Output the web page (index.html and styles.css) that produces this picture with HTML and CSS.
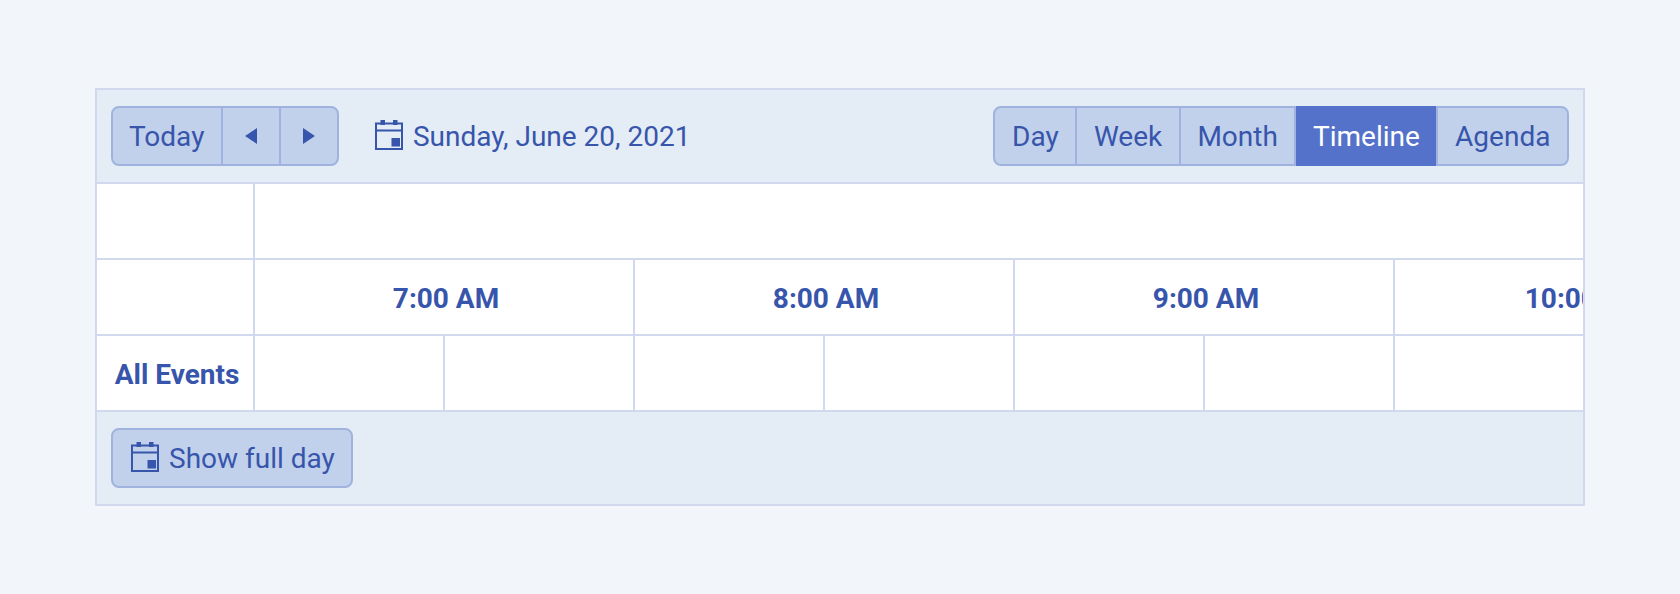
FILE: index.html
```html
<!DOCTYPE html>
<html lang="en">
<head>
<meta charset="utf-8">
<title>Scheduler</title>
<link rel="stylesheet" href="styles.css">
</head>
<body>
<div class="scheduler">
  <div class="toolbar">
    <div class="group">
      <button class="btn btn-today">Today</button>
      <button class="btn btn-icon"><svg class="arrow" viewBox="0 0 12 16"><path d="M12 0V16L0 8Z"/></svg></button>
      <button class="btn btn-icon btn-next"><svg class="arrow" viewBox="0 0 12 16"><path d="M0 0V16L12 8Z"/></svg></button>
    </div>
    <div class="date">
      <svg class="cal" viewBox="0 0 28 30"><path class="cal-line" d="M1 3.5H27V29H1ZM1 10.5H27"/><path class="cal-fill" d="M5.5 0H10V5H5.5ZM18 0H22.5V5H18ZM16.5 18H25V26.5H16.5Z"/></svg>
      <span>Sunday, June 20, 2021</span>
    </div>
    <div class="group views">
      <button class="btn">Day</button>
      <button class="btn">Week</button>
      <button class="btn">Month</button>
      <button class="btn active">Timeline</button>
      <button class="btn">Agenda</button>
    </div>
  </div>
  <div class="grid">
    <div class="row">
      <div class="cell lead"></div>
      <div class="cell wide"></div>
    </div>
    <div class="row">
      <div class="cell lead"></div>
      <div class="cell hour">7:00 AM</div>
      <div class="cell hour">8:00 AM</div>
      <div class="cell hour">9:00 AM</div>
      <div class="cell hour">10:00 AM</div>
    </div>
    <div class="row">
      <div class="cell lead resource">All Events</div>
      <div class="cell half"></div>
      <div class="cell half"></div>
      <div class="cell half"></div>
      <div class="cell half"></div>
      <div class="cell half"></div>
      <div class="cell half"></div>
      <div class="cell half"></div>
      <div class="cell half"></div>
    </div>
  </div>
  <div class="toolbar footer">
    <div class="group">
      <button class="btn btn-full">
        <svg class="cal" viewBox="0 0 28 30"><path class="cal-line" d="M1 3.5H27V29H1ZM1 10.5H27"/><path class="cal-fill" d="M5.5 0H10V5H5.5ZM18 0H22.5V5H18ZM16.5 18H25V26.5H16.5Z"/></svg>
        <span>Show full day</span>
      </button>
    </div>
  </div>
</div>
</body>
</html>
```
FILE: styles.css
```css
* { box-sizing: border-box; }
html, body { margin: 0; height: 100%; }
body {
  background: #f2f5fa;
  padding: 88px 95px;
  font-family: Roboto, "Liberation Sans", sans-serif;
  color: #3755ab;
  overflow: hidden;
}
.scheduler {
  width: 1490px;
  border: 2px solid #d1d9ee;
  background: #fff;
}
.toolbar {
  height: 94px;
  padding: 16px 14px;
  background: #e4ecf6;
  border-bottom: 2px solid #d1d9ee;
  display: flex;
  align-items: center;
}
.footer {
  height: 92px;
  border-bottom: 0;
}
.group {
  display: flex;
  height: 60px;
  border: 2px solid #a0b3de;
  border-radius: 8px;
  background: #c1d1eb;
}
.btn {
  display: flex;
  align-items: center;
  height: 100%;
  margin: 0;
  padding: 0 16.6px;
  border: 0;
  border-right: 2px solid #a0b3de;
  background: transparent;
  font: 400 28px Roboto, "Liberation Sans", sans-serif;
  color: #3755ab;
}
.btn:last-child { border-right: 0; }
.btn-today { padding: 0 16.5px 0 16px; }
.btn-icon {
  width: 58px;
  padding: 0;
  justify-content: center;
}
.btn-next { width: 56px; }
.arrow {
  width: 12px;
  height: 16px;
  fill: #3755ab;
}
.date {
  display: flex;
  align-items: center;
  gap: 10px;
  margin-left: 36px;
  font-size: 28px;
}
.cal {
  width: 28px;
  height: 30px;
  flex: none;
  margin-bottom: 2px;
}
.cal-line {
  fill: none;
  stroke: #3755ab;
  stroke-width: 2;
}
.cal-fill { fill: #3755ab; }
.views {
  margin-left: auto;
}
.active {
  background: #5472c9;
  color: #fff;
  margin: -2px 0;
  height: 60px;
}
.btn-full {
  gap: 10px;
  padding: 0 16px 0 18px;
}
.grid {
  overflow: hidden;
}
.row {
  display: flex;
  height: 76px;
  border-bottom: 2px solid #d1d9ee;
}
.cell {
  flex: none;
  border-right: 2px solid #d1d9ee;
}
.lead { width: 158px; }
.wide { flex: 1; border-right: 0; }
.hour {
  width: 380px;
  display: flex;
  align-items: center;
  justify-content: center;
  padding: 2px 0 0 4px;
  font-size: 28px;
  font-weight: 700;
  white-space: nowrap;
}
.half { width: 190px; }
.resource {
  display: flex;
  align-items: center;
  justify-content: center;
  padding: 2px 0 0 4px;
  font-size: 28px;
  font-weight: 700;
  white-space: nowrap;
}
```
